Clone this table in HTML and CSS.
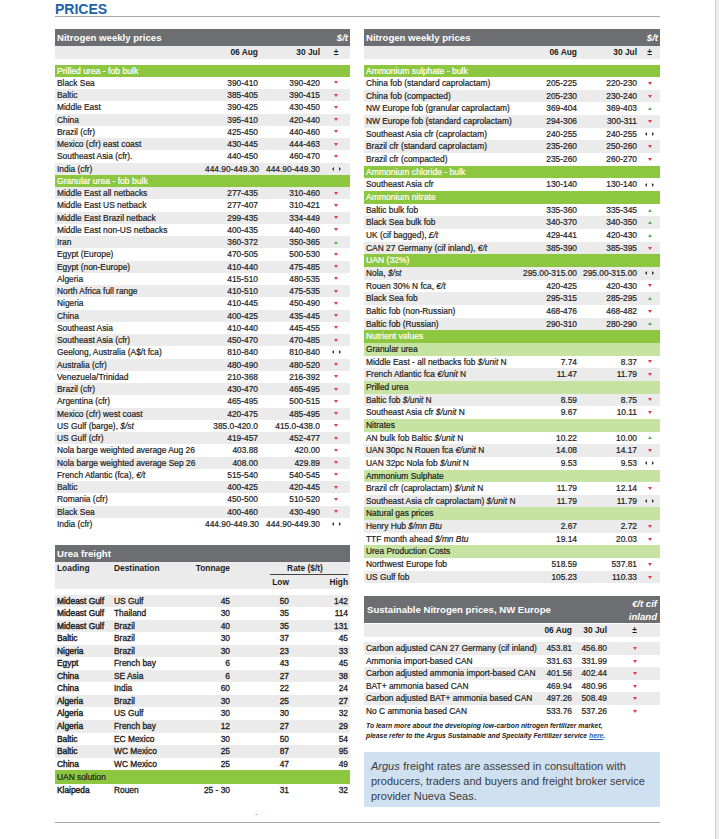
FILE: index.html
```html
<!DOCTYPE html>
<html>
<head>
<meta charset="utf-8">
<link rel="stylesheet" href="styles.css">
</head>
<body>
<div class="screen">
<div class="page">
  <h1 class="title">PRICES</h1>
  <div class="cols">
    <div class="col left">
      <div class="tbl tl">
        <div class="hd"><span>Nitrogen weekly prices</span><i>$/t</i></div>
        <div class="r sh"><span></span><span class="v">06 Aug</span><span class="v">30 Jul</span><span class="pm">±</span></div>
        <div class="gap"></div>
        <div class="sec">Prilled urea - fob bulk</div>
        <div class="r"><span>Black Sea</span><span class="v">390-410</span><span class="v">390-420</span><span class="a dn"></span></div>
        <div class="r g"><span>Baltic</span><span class="v">385-405</span><span class="v">390-415</span><span class="a dn"></span></div>
        <div class="r"><span>Middle East</span><span class="v">390-425</span><span class="v">430-450</span><span class="a dn"></span></div>
        <div class="r g"><span>China</span><span class="v">395-410</span><span class="v">420-440</span><span class="a dn"></span></div>
        <div class="r"><span>Brazil (cfr)</span><span class="v">425-450</span><span class="v">440-460</span><span class="a dn"></span></div>
        <div class="r g"><span>Mexico (cfr) east coast</span><span class="v">430-445</span><span class="v">444-463</span><span class="a dn"></span></div>
        <div class="r"><span>Southeast Asia (cfr).</span><span class="v">440-450</span><span class="v">460-470</span><span class="a dn"></span></div>
        <div class="r g"><span>India (cfr)</span><span class="v">444.90-449.30</span><span class="v">444.90-449.30</span><span class="a eq"></span></div>
        <div class="sec">Granular urea - fob bulk</div>
        <div class="r g"><span>Middle East all netbacks</span><span class="v">277-435</span><span class="v">310-460</span><span class="a dn"></span></div>
        <div class="r"><span>Middle East US netback</span><span class="v">277-407</span><span class="v">310-421</span><span class="a dn"></span></div>
        <div class="r g"><span>Middle East Brazil netback</span><span class="v">299-435</span><span class="v">334-449</span><span class="a dn"></span></div>
        <div class="r"><span>Middle East non-US netbacks</span><span class="v">400-435</span><span class="v">440-460</span><span class="a dn"></span></div>
        <div class="r g"><span>Iran</span><span class="v">360-372</span><span class="v">350-365</span><span class="a up"></span></div>
        <div class="r"><span>Egypt (Europe)</span><span class="v">470-505</span><span class="v">500-530</span><span class="a dn"></span></div>
        <div class="r g"><span>Egypt (non-Europe)</span><span class="v">410-440</span><span class="v">475-485</span><span class="a dn"></span></div>
        <div class="r"><span>Algeria</span><span class="v">415-510</span><span class="v">480-535</span><span class="a dn"></span></div>
        <div class="r g"><span>North Africa full range</span><span class="v">410-510</span><span class="v">475-535</span><span class="a dn"></span></div>
        <div class="r"><span>Nigeria</span><span class="v">410-445</span><span class="v">450-490</span><span class="a dn"></span></div>
        <div class="r g"><span>China</span><span class="v">400-425</span><span class="v">435-445</span><span class="a dn"></span></div>
        <div class="r"><span>Southeast Asia</span><span class="v">410-440</span><span class="v">445-455</span><span class="a dn"></span></div>
        <div class="r g"><span>Southeast Asia (cfr)</span><span class="v">450-470</span><span class="v">470-485</span><span class="a dn"></span></div>
        <div class="r"><span>Geelong, Australia (A$/t fca)</span><span class="v">810-840</span><span class="v">810-840</span><span class="a eq"></span></div>
        <div class="r g"><span>Australia (cfr)</span><span class="v">480-490</span><span class="v">480-520</span><span class="a dn"></span></div>
        <div class="r"><span>Venezuela/Trinidad</span><span class="v">210-368</span><span class="v">216-392</span><span class="a dn"></span></div>
        <div class="r g"><span>Brazil (cfr)</span><span class="v">430-470</span><span class="v">465-495</span><span class="a dn"></span></div>
        <div class="r"><span>Argentina (cfr)</span><span class="v">465-495</span><span class="v">500-515</span><span class="a dn"></span></div>
        <div class="r g"><span>Mexico (cfr) west coast</span><span class="v">420-475</span><span class="v">485-495</span><span class="a dn"></span></div>
        <div class="r"><span>US Gulf (barge), <i>$/st</i></span><span class="v">385.0-420.0</span><span class="v">415.0-438.0</span><span class="a dn"></span></div>
        <div class="r g"><span>US Gulf (cfr)</span><span class="v">419-457</span><span class="v">452-477</span><span class="a dn"></span></div>
        <div class="r"><span>Nola barge weighted average Aug 26</span><span class="v">403.88</span><span class="v">420.00</span><span class="a dn"></span></div>
        <div class="r g"><span>Nola barge weighted average Sep 26</span><span class="v">408.00</span><span class="v">429.89</span><span class="a dn"></span></div>
        <div class="r"><span>French Atlantic (fca), <i>€/t</i></span><span class="v">515-540</span><span class="v">540-545</span><span class="a dn"></span></div>
        <div class="r g"><span>Baltic</span><span class="v">400-425</span><span class="v">420-445</span><span class="a dn"></span></div>
        <div class="r"><span>Romania (cfr)</span><span class="v">450-500</span><span class="v">510-520</span><span class="a dn"></span></div>
        <div class="r g"><span>Black Sea</span><span class="v">400-460</span><span class="v">430-490</span><span class="a dn"></span></div>
        <div class="r"><span>India (cfr)</span><span class="v">444.90-449.30</span><span class="v">444.90-449.30</span><span class="a eq"></span></div>
      </div>

      <div class="tbl fr">
        <div class="hd"><span>Urea freight</span></div>
        <div class="fsh">
          <div class="f1"><span>Loading</span><span>Destination</span><span class="v">Tonnage</span><span class="rate"><span class="rt">Rate ($/t)</span></span></div>
          <div class="f2"><span></span><span></span><span></span><span class="v">Low</span><span class="v">High</span></div>
        </div>
        <div class="gap"></div>
        <div class="r g"><span>Mideast Gulf</span><span>US Gulf</span><span class="v">45</span><span class="v">50</span><span class="v">142</span></div>
        <div class="r"><span>Mideast Gulf</span><span>Thailand</span><span class="v">30</span><span class="v">35</span><span class="v">114</span></div>
        <div class="r g"><span>Mideast Gulf</span><span>Brazil</span><span class="v">40</span><span class="v">35</span><span class="v">131</span></div>
        <div class="r"><span>Baltic</span><span>Brazil</span><span class="v">30</span><span class="v">37</span><span class="v">45</span></div>
        <div class="r g"><span>Nigeria</span><span>Brazil</span><span class="v">30</span><span class="v">23</span><span class="v">33</span></div>
        <div class="r"><span>Egypt</span><span>French bay</span><span class="v">6</span><span class="v">43</span><span class="v">45</span></div>
        <div class="r g"><span>China</span><span>SE Asia</span><span class="v">6</span><span class="v">27</span><span class="v">38</span></div>
        <div class="r"><span>China</span><span>India</span><span class="v">60</span><span class="v">22</span><span class="v">24</span></div>
        <div class="r g"><span>Algeria</span><span>Brazil</span><span class="v">30</span><span class="v">25</span><span class="v">27</span></div>
        <div class="r"><span>Algeria</span><span>US Gulf</span><span class="v">30</span><span class="v">30</span><span class="v">32</span></div>
        <div class="r g"><span>Algeria</span><span>French bay</span><span class="v">12</span><span class="v">27</span><span class="v">29</span></div>
        <div class="r"><span>Baltic</span><span>EC Mexico</span><span class="v">30</span><span class="v">50</span><span class="v">54</span></div>
        <div class="r g"><span>Baltic</span><span>WC Mexico</span><span class="v">25</span><span class="v">87</span><span class="v">95</span></div>
        <div class="r"><span>China</span><span>WC Mexico</span><span class="v">25</span><span class="v">47</span><span class="v">49</span></div>
        <div class="sec uan">UAN solution</div>
        <div class="r"><span>Klaipeda</span><span>Rouen</span><span class="v">25 - 30</span><span class="v">31</span><span class="v">32</span></div>
      </div>
    </div>

    <div class="col right">
      <div class="tbl tr">
        <div class="hd"><span>Nitrogen weekly prices</span><i>$/t</i></div>
        <div class="r sh"><span></span><span class="v">06 Aug</span><span class="v">30 Jul</span><span class="pm">±</span></div>
        <div class="gap"></div>
        <div class="sec">Ammonium sulphate - bulk</div>
        <div class="r"><span>China fob (standard caprolactam)</span><span class="v">205-225</span><span class="v">220-230</span><span class="a dn"></span></div>
        <div class="r g"><span>China fob (compacted)</span><span class="v">205-230</span><span class="v">230-240</span><span class="a dn"></span></div>
        <div class="r"><span>NW Europe fob (granular caprolactam)</span><span class="v">369-404</span><span class="v">369-403</span><span class="a up"></span></div>
        <div class="r g"><span>NW Europe fob (standard caprolactam)</span><span class="v">294-306</span><span class="v">300-311</span><span class="a dn"></span></div>
        <div class="r"><span>Southeast Asia cfr (caprolactam)</span><span class="v">240-255</span><span class="v">240-255</span><span class="a eq"></span></div>
        <div class="r g"><span>Brazil cfr (standard caprolactam)</span><span class="v">235-260</span><span class="v">250-260</span><span class="a dn"></span></div>
        <div class="r"><span>Brazil cfr (compacted)</span><span class="v">235-260</span><span class="v">260-270</span><span class="a dn"></span></div>
        <div class="sec">Ammonium chloride - bulk</div>
        <div class="r"><span>Southeast Asia cfr</span><span class="v">130-140</span><span class="v">130-140</span><span class="a eq"></span></div>
        <div class="sec">Ammonium nitrate</div>
        <div class="r"><span>Baltic bulk fob</span><span class="v">335-360</span><span class="v">335-345</span><span class="a up"></span></div>
        <div class="r g"><span>Black Sea bulk fob</span><span class="v">340-370</span><span class="v">340-350</span><span class="a up"></span></div>
        <div class="r"><span>UK (cif bagged), <i>£/t</i></span><span class="v">429-441</span><span class="v">420-430</span><span class="a up"></span></div>
        <div class="r g"><span>CAN 27 Germany (cif inland), <i>€/t</i></span><span class="v">385-390</span><span class="v">385-395</span><span class="a dn"></span></div>
        <div class="sec">UAN (32%)</div>
        <div class="r g"><span>Nola, <i>$/st</i></span><span class="v">295.00-315.00</span><span class="v">295.00-315.00</span><span class="a eq"></span></div>
        <div class="r"><span>Rouen 30% N fca, <i>€/t</i></span><span class="v">420-425</span><span class="v">420-430</span><span class="a dn"></span></div>
        <div class="r g"><span>Black Sea fob</span><span class="v">295-315</span><span class="v">285-295</span><span class="a up"></span></div>
        <div class="r"><span>Baltic fob (non-Russian)</span><span class="v">468-476</span><span class="v">468-482</span><span class="a dn"></span></div>
        <div class="r g"><span>Baltic fob (Russian)</span><span class="v">290-310</span><span class="v">280-290</span><span class="a up"></span></div>
        <div class="sec">Nutrient values</div>
        <div class="sub">Granular urea</div>
        <div class="r"><span>Middle East - all netbacks fob <i>$/unit</i> N</span><span class="v">7.74</span><span class="v">8.37</span><span class="a dn"></span></div>
        <div class="r g"><span>French Atlantic fca <i>€/unit</i> N</span><span class="v">11.47</span><span class="v">11.79</span><span class="a dn"></span></div>
        <div class="sub">Prilled urea</div>
        <div class="r g"><span>Baltic fob <i>$/unit</i> N</span><span class="v">8.59</span><span class="v">8.75</span><span class="a dn"></span></div>
        <div class="r"><span>Southeast Asia cfr <i>$/unit</i> N</span><span class="v">9.67</span><span class="v">10.11</span><span class="a dn"></span></div>
        <div class="sub">Nitrates</div>
        <div class="r"><span>AN bulk fob Baltic <i>$/unit</i> N</span><span class="v">10.22</span><span class="v">10.00</span><span class="a up"></span></div>
        <div class="r g"><span>UAN 30pc N Rouen fca <i>€/unit</i> N</span><span class="v">14.08</span><span class="v">14.17</span><span class="a dn"></span></div>
        <div class="r"><span>UAN 32pc Nola fob <i>$/unit</i> N</span><span class="v">9.53</span><span class="v">9.53</span><span class="a eq"></span></div>
        <div class="sub">Ammonium Sulphate</div>
        <div class="r"><span>Brazil cfr (caprolactam) <i>$/unit</i> N</span><span class="v">11.79</span><span class="v">12.14</span><span class="a dn"></span></div>
        <div class="r g"><span>Southeast Asia cfr caprolactam) <i>$/unit</i> N</span><span class="v">11.79</span><span class="v">11.79</span><span class="a eq"></span></div>
        <div class="sub">Natural gas prices</div>
        <div class="r g"><span>Henry Hub <i>$/mn Btu</i></span><span class="v">2.67</span><span class="v">2.72</span><span class="a dn"></span></div>
        <div class="r"><span>TTF month ahead <i>$/mn Btu</i></span><span class="v">19.14</span><span class="v">20.03</span><span class="a dn"></span></div>
        <div class="sub">Urea Production Costs</div>
        <div class="r"><span>Northwest Europe fob</span><span class="v">518.59</span><span class="v">537.81</span><span class="a dn"></span></div>
        <div class="r g"><span>US Gulf fob</span><span class="v">105.23</span><span class="v">110.33</span><span class="a dn"></span></div>
      </div>

      <div class="tbl ts">
        <div class="shd"><span>Sustainable Nitrogen prices, NW Europe</span><i>€/t cif<br>inland</i></div>
        <div class="r sh"><span></span><span class="v">06 Aug</span><span class="v">30 Jul</span><span class="pm">±</span></div>
        <div class="gap"></div>
        <div class="r g"><span>Carbon adjusted CAN 27 Germany (cif inland)</span><span class="v">453.81</span><span class="v">456.80</span><span class="a dn"></span></div>
        <div class="r"><span>Ammonia import-based CAN</span><span class="v">331.63</span><span class="v">331.99</span><span class="a dn"></span></div>
        <div class="r g"><span>Carbon adjusted ammonia import-based CAN</span><span class="v">401.56</span><span class="v">402.44</span><span class="a dn"></span></div>
        <div class="r"><span>BAT+ ammonia based CAN</span><span class="v">469.94</span><span class="v">480.96</span><span class="a dn"></span></div>
        <div class="r g"><span>Carbon adjusted BAT+ ammonia based CAN</span><span class="v">497.26</span><span class="v">508.49</span><span class="a dn"></span></div>
        <div class="r"><span>No C ammonia based CAN</span><span class="v">533.76</span><span class="v">537.26</span><span class="a dn"></span></div>
      </div>
      <p class="note">To learn more about the developing low-carbon nitrogen fertilizer market,<br>please refer to the Argus Sustainable and Specialty Fertilizer service <u>here</u>.</p>
      <div class="box">
        <div class="ln"><i>Argus</i><span class="sp">freight rates are assessed in consultation with</span></div>
        <div class="ln">producers, traders and buyers and freight broker service</div>
        <div class="ln">provider Nueva Seas.</div>
      </div>
    </div>
  </div>
  <div class="foot"><span class="dot">.</span></div>
</div>
<div class="edge"></div>
</div>
</body>
</html>
```

FILE: styles.css
```css
* { box-sizing: border-box; margin: 0; padding: 0; }
body { margin: 0; background: #fff; font-family: "Liberation Sans", Arial, sans-serif; color: #1c1c1c; font-size: 8.4px; }
.screen { display: flex; width: 719px; min-height: 839px; }
.page { width: 715px; padding-left: 55px; }
.edge { flex: 1; background: #eceeee; border-left: 1px solid #c9cdcd; }

.title { width: 605px; height: 17px; padding-top: 1px; border-bottom: 1.5px solid #a6a8ab; font-family: "Liberation Sans Narrow", "Liberation Sans", sans-serif; font-size: 14px; line-height: 16px; font-weight: bold; color: #1b62a9; }

.cols { display: flex; gap: 14px; margin-top: 11.5px; align-items: flex-start; }
.col { display: flex; flex-direction: column; }
.left { width: 295px; }
.right { width: 296px; }

.hd { background: #6d6e71; color: #fff; font-weight: bold; font-size: 9.6px; height: 17px; display: flex; justify-content: space-between; align-items: center; padding: 0 2px; }
.hd i, .shd i { font-style: italic; }

.r { display: grid; height: 12.26px; line-height: 12.26px; white-space: nowrap; -webkit-text-stroke: 0.2px currentColor; }
.r > span:first-child { padding-left: 2px; }
.r .v { text-align: right; padding-right: 2px; }
.g { background: #ebebeb; }
.sh { background: #ebebeb; height: 13px; line-height: 13px; font-weight: bold; -webkit-text-stroke: 0; }
.pm { text-align: center; }
.gap { height: 6px; }

.sec { background: #8dc63f; color: #fff; font-size: 8.6px; height: 12.26px; line-height: 12.26px; padding-left: 2px; white-space: nowrap; -webkit-text-stroke: 0.2px currentColor; }
.sub { background: #c7e3a2; height: 12.66px; line-height: 12.66px; padding-left: 2px; -webkit-text-stroke: 0.2px currentColor; }

.tl .r { grid-template-columns: 150px 55px 62px 28px; }
.tl .sh { height: 13px; line-height: 13px; }

.tr .r, .tr .sec { height: 12.66px; line-height: 12.66px; }
.tr .r { grid-template-columns: 155px 60px 60px 21px; }
.tr .sh { height: 13px; line-height: 13px; }

.a { display: flex; align-items: center; justify-content: center; }
.dn::before { content: ""; border-left: 2.5px solid transparent; border-right: 2.5px solid transparent; border-top: 3px solid #e63b40; }
.up::before { content: ""; border-left: 2.5px solid transparent; border-right: 2.5px solid transparent; border-bottom: 3px solid #4fb552; }
.eq { gap: 5px; }
.eq::before { content: ""; border-top: 2px solid transparent; border-bottom: 2px solid transparent; border-right: 2.5px solid #333; }
.eq::after { content: ""; border-top: 2px solid transparent; border-bottom: 2px solid transparent; border-left: 2.5px solid #333; }

/* freight */
.fr { margin-top: 15px; }
.fr .r { grid-template-columns: 59px 66px 52px 59px 59px; height: 12.56px; line-height: 12.56px; -webkit-text-stroke: 0.3px currentColor; }
.fr .r > span:first-child { -webkit-text-stroke: 0.4px currentColor; }
.fsh { background: #ebebeb; font-weight: bold; }
.f1, .f2 { display: grid; grid-template-columns: 59px 66px 52px 118px; white-space: nowrap; }
.f2 { grid-template-columns: 59px 66px 52px 59px 59px; height: 14px; line-height: 14px; }
.f1 { height: 13px; line-height: 12px; }
.f1 > span:first-child { padding-left: 2px; }
.fsh .v { text-align: right; padding-right: 2px; }
.rate { display: block; padding: 0 2px 0 38px; }
.rt { display: block; border-bottom: 1px solid #444; text-align: center; padding-right: 8px; }
.fr .gap { height: 5.5px; }
.uan { color: #1c1c1c; height: 14px; line-height: 14px; font-size: 8.4px; }
.fr .uan + .r { height: 12.5px; }

/* sustainable */
.ts { margin-top: 13px; }
.shd { background: #6d6e71; color: #fff; font-weight: bold; font-size: 9.6px; height: 27px; display: flex; justify-content: space-between; align-items: center; padding: 0 3px 0 3px; margin-bottom: 1px; }
.shd i { text-align: right; line-height: 13px; }
.ts .r { grid-template-columns: 176px 34px 35px 51px; height: 12.5px; line-height: 12.5px; }
.ts .sh { height: 13px; line-height: 13px; }
.ts .gap { height: 5px; }

.note { margin-top: 4px; padding-left: 2px; font-size: 6.8px; line-height: 10px; font-weight: bold; font-style: italic; color: #222; white-space: nowrap; }
.note u { color: #2b5fad; }
.box { margin-top: 11px; background: #cfe0f1; height: 55px; padding: 7px 4px 0 7px; font-size: 11px; line-height: 15px; color: #3b3b3b; }
.ln { display: flex; white-space: nowrap; }
.ln .sp { margin-left: 3.5px; }

.foot { width: 605px; height: 16px; border-bottom: 1.5px solid #a6a8ab; padding-left: 200px; font-size: 8px; line-height: 12px; }
```
